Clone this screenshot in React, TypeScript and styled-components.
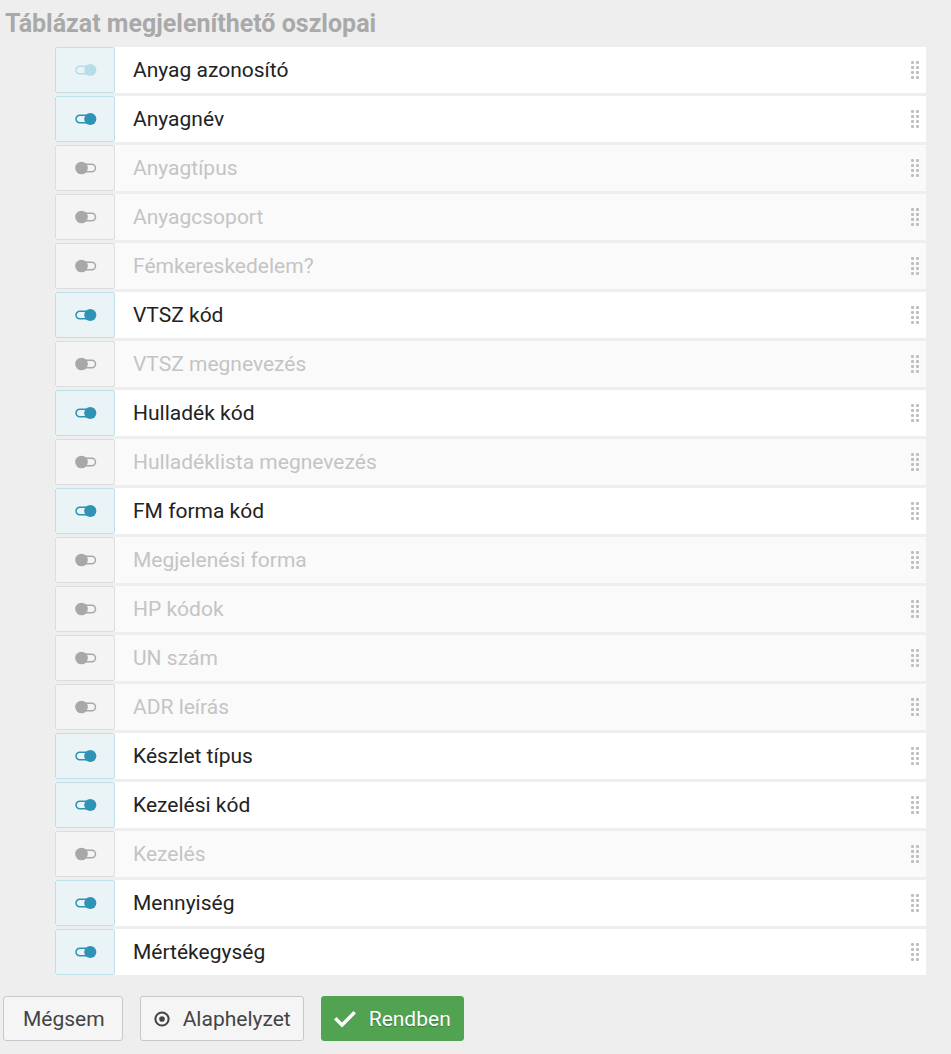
import React from 'react';
import styled, { createGlobalStyle } from 'styled-components';

const GlobalStyle = createGlobalStyle`
  html, body {
    margin: 0;
    padding: 0;
    background: #eeeeee;
    font-family: Roboto, "Liberation Sans", sans-serif;
  }
`;

const Page = styled.div`
  width: 951px;
  min-height: 1054px;
  box-sizing: border-box;
  padding: 7px 0 0 0;
`;

const Title = styled.h2`
  margin: 0 0 0 5px;
  font-size: 25px;
  line-height: 34px;
  font-weight: 700;
  color: #a9a9a9;
`;

const List = styled.div`
  display: flex;
  flex-direction: column;
  gap: 3px;
  margin: 6px 25px 0 55px;
`;

const Row = styled.div<{ $on: boolean }>`
  display: flex;
  height: 46px;
  background: ${(p) => (p.$on ? '#ffffff' : '#fafafa')};
`;

const ToggleCell = styled.div<{ $on: boolean }>`
  width: 60px;
  box-sizing: border-box;
  display: flex;
  align-items: center;
  justify-content: center;
  border: 1px solid ${(p) => (p.$on ? '#bfe0ea' : '#dddddd')};
  border-radius: 2px;
  background: ${(p) => (p.$on ? '#eaf4f7' : '#f4f4f4')};
`;

const Label = styled.div<{ $on: boolean }>`
  flex: 1;
  display: flex;
  align-items: center;
  padding-left: 18px;
  font-size: 21px;
  color: ${(p) => (p.$on ? '#222222' : '#c4c4c4')};
`;

const Handle = styled.div`
  display: grid;
  grid-template-columns: repeat(2, 3px);
  grid-auto-rows: 3px;
  gap: 2px;
  align-self: center;
  margin-right: 7px;
  opacity: 0.75;
  span {
    background: #aaaaaa;
    border-radius: 1px;
  }
`;

const Footer = styled.div`
  display: flex;
  gap: 17px;
  margin: 21px 0 0 3px;
`;

const Button = styled.button<{ $primary?: boolean; $pad: string }>`
  height: 45px;
  box-sizing: border-box;
  display: flex;
  align-items: center;
  gap: 13px;
  padding: ${(p) => p.$pad};
  font-family: Roboto, "Liberation Sans", sans-serif;
  font-size: 21px;
  border-radius: 3px;
  border: 1px solid ${(p) => (p.$primary ? '#51a351' : '#c8c8c8')};
  background: ${(p) => (p.$primary ? '#51a351' : '#f5f5f5')};
  color: ${(p) => (p.$primary ? '#ffffff' : '#444444')};
  text-shadow: ${(p) => (p.$primary ? '0 1px 1px rgba(0,0,0,0.3)' : 'none')};
`;

type Mode = 'on' | 'off' | 'locked';

const Toggle: React.FC<{ mode: Mode }> = ({ mode }) => {
  const color = mode === 'on' ? '#2e93b5' : mode === 'locked' ? '#b6dde8' : '#a8a8a8';
  if (mode === 'off') {
    return (
      <svg width="22" height="14" viewBox="0 0 22 14" style={{ marginLeft: 1 }}>
        <rect x="6" y="3.25" width="14.5" height="7.5" rx="3.75" fill="none" stroke={color} strokeWidth="1.5" />
        <circle cx="6.5" cy="7" r="6.3" fill={color} />
      </svg>
    );
  }
  return (
    <svg width="22" height="14" viewBox="0 0 22 14" style={{ marginLeft: 1 }}>
      <rect x="1" y="3.25" width="14" height="7.5" rx="3.75" fill="none" stroke={color} strokeWidth="1.5" />
      <circle cx="15.3" cy="7" r="6.1" fill={color} />
    </svg>
  );
};

const columns: { name: string; mode: Mode }[] = [
  { name: 'Anyag azonosító', mode: 'locked' },
  { name: 'Anyagnév', mode: 'on' },
  { name: 'Anyagtípus', mode: 'off' },
  { name: 'Anyagcsoport', mode: 'off' },
  { name: 'Fémkereskedelem?', mode: 'off' },
  { name: 'VTSZ kód', mode: 'on' },
  { name: 'VTSZ megnevezés', mode: 'off' },
  { name: 'Hulladék kód', mode: 'on' },
  { name: 'Hulladéklista megnevezés', mode: 'off' },
  { name: 'FM forma kód', mode: 'on' },
  { name: 'Megjelenési forma', mode: 'off' },
  { name: 'HP kódok', mode: 'off' },
  { name: 'UN szám', mode: 'off' },
  { name: 'ADR leírás', mode: 'off' },
  { name: 'Készlet típus', mode: 'on' },
  { name: 'Kezelési kód', mode: 'on' },
  { name: 'Kezelés', mode: 'off' },
  { name: 'Mennyiség', mode: 'on' },
  { name: 'Mértékegység', mode: 'on' },
];

const App: React.FC = () => {
  return (
    <Page>
      <GlobalStyle />
      <Title>Táblázat megjeleníthető oszlopai</Title>
      <List>
        {columns.map((c) => {
          const on = c.mode !== 'off';
          return (
            <Row key={c.name} $on={on}>
              <ToggleCell $on={on}>
                <Toggle mode={c.mode} />
              </ToggleCell>
              <Label $on={on}>{c.name}</Label>
              <Handle>
                {Array.from({ length: 8 }).map((_, i) => (
                  <span key={i} />
                ))}
              </Handle>
            </Row>
          );
        })}
      </List>
      <Footer>
        <Button $pad="0 17px 0 19px">Mégsem</Button>
        <Button $pad="0 12px 0 13px">
          <svg width="16" height="16" viewBox="0 0 16 16">
            <circle cx="8" cy="8" r="6.6" fill="none" stroke="#444" strokeWidth="2" />
            <circle cx="8" cy="8" r="2.8" fill="#444" />
          </svg>
          Alaphelyzet
        </Button>
        <Button $primary $pad="0 12px 0 12px">
          <svg width="22" height="18" viewBox="0 0 22 18">
            <path d="M2.5 9.5 L8 15 L19.5 3.5" fill="none" stroke="#fff" strokeWidth="3.4" strokeLinecap="square" />
          </svg>
          Rendben
        </Button>
      </Footer>
    </Page>
  );
};

export default App;
